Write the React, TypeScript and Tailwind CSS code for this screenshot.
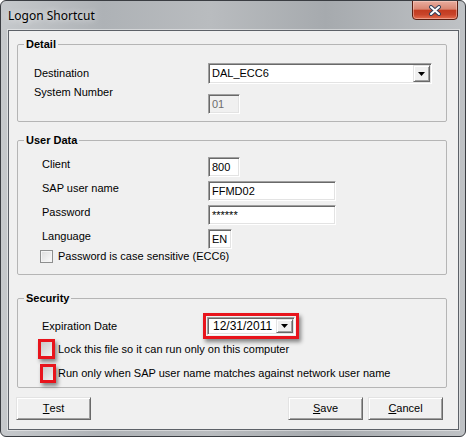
import React from "react";

const sunken =
  "border border-t-[#a0a0a0] border-l-[#a0a0a0] border-b-white border-r-white shadow-[inset_1px_1px_0_#696969,inset_-1px_-1px_0_#e3e3e3]";
const raised =
  "border border-t-[#e3e3e3] border-l-[#e3e3e3] border-b-[#696969] border-r-[#696969] shadow-[inset_1px_1px_0_#ffffff,inset_-1px_-1px_0_#a0a0a0]";

function DropBtn() {
  return (
    <div className={`w-[17px] h-full shrink-0 bg-[#f0f0f0] ${raised} flex items-center justify-center`}>
      <svg width="7" height="4" viewBox="0 0 7 4">
        <polygon points="0,0 7,0 3.5,4" fill="#000" />
      </svg>
    </div>
  );
}

function Field({ w, value, disabled }: { w: string; value: string; disabled?: boolean }) {
  return (
    <div
      className={`${w} h-[20px] ${sunken} ${disabled ? "bg-[#f0f0f0] text-[#6d6d6d]" : "bg-white text-black"} pl-[3px] text-[11px] leading-[18px] overflow-hidden whitespace-nowrap`}
    >
      {value}
    </div>
  );
}

function Group({ title, className, children }: { title: string; className: string; children: React.ReactNode }) {
  return (
    <fieldset className={`ml-[8px] w-[430px] border border-[#b5b5b5] rounded-[2px] ${className}`}>
      <legend className="ml-[6px] px-[2px] text-[11px] leading-[15px] font-bold text-black">{title}</legend>
      {children}
    </fieldset>
  );
}

function CheckBox() {
  return (
    <div className="w-[13px] h-[13px] shrink-0 border border-[#8e8f8f] bg-[linear-gradient(135deg,#dcdcdc,#fbfbfb)] shadow-[inset_0_0_0_1px_#f4f4f4]" />
  );
}

function RedCheck({ w, h }: { w: string; h: string }) {
  return (
    <div className={`${w} ${h} shrink-0 border-[3px] border-[#e8141c] shadow-[2px_3px_4px_rgba(0,0,0,0.45)] bg-[linear-gradient(135deg,#c9c9c9,#f2f2f2)]`} />
  );
}

function Btn({ label, rest }: { label: string; rest: string }) {
  return (
    <div className={`w-[75px] h-[23px] bg-[#f0f0f0] ${raised} flex items-center justify-center text-[11px] text-black`}>
      <span className="underline underline-offset-[1px]">{label}</span>
      <span>{rest}</span>
    </div>
  );
}

export default function App() {
  return (
    <div className="w-[466px] h-[437px] border border-[#3a3d42] rounded-[6px] bg-[linear-gradient(90deg,#c6c9cc_0%,#aeb2b6_22%,#b9bcbf_45%,#a6aaae_70%,#bfc2c5_100%)] flex flex-col font-['Liberation_Sans',Arial,sans-serif] overflow-hidden">
      {/* title bar */}
      <div className="h-[29px] flex justify-between pl-[7px] pr-[7px]">
        <div className="self-center text-[12px] text-black font-['Noto_Sans',sans-serif] [text-shadow:0_0_6px_rgba(255,255,255,0.95)]">
          Logon Shortcut
        </div>
        <div className="-mt-[1px] w-[46px] h-[20px] rounded-b-[4px] border border-[#5a1e12] bg-[linear-gradient(180deg,#e9ad9f_0%,#d98672_45%,#c33b20_52%,#c8442a_75%,#e56d4f_100%)] shadow-[inset_0_0_0_1px_rgba(255,220,210,0.45)] flex items-center justify-center">
          <svg width="14" height="11" viewBox="0 0 14 11">
            <path d="M3 2 L11 9 M11 2 L3 9" stroke="#34415a" strokeWidth="4" strokeLinecap="round" />
            <path d="M3 2 L11 9 M11 2 L3 9" stroke="#ffffff" strokeWidth="2" strokeLinecap="round" />
          </svg>
        </div>
      </div>

      {/* client area */}
      <div className="ml-[7px] w-[451px] h-[400px] border border-[#5d6168] shadow-[0_0_0_1px_rgba(255,255,255,0.45)] bg-[#f0f0f0] flex flex-col">
        <div className="h-[6px]" />

        {/* Detail */}
        <Group title="Detail" className="h-[85px]">
          <div className="pt-[11px]">
            <div className="flex items-center h-[21px]">
              <div className="w-[190px] pl-[16px] text-[11px] leading-[13px] text-black">Destination</div>
              <div className={`w-[224px] h-[21px] bg-white ${sunken} p-[1px] flex`}>
                <div className="flex-1 pl-[2px] text-[11px] leading-[17px] text-black">DAL_ECC6</div>
                <DropBtn />
              </div>
            </div>
            <div className="flex items-start mt-[10px]">
              <div className="w-[190px] pl-[16px] -mt-[8px] text-[11px] leading-[13px] text-black">System Number</div>
              <Field w="w-[32px]" value="01" disabled />
            </div>
          </div>
        </Group>

        <div className="h-[11px]" />

        {/* User Data */}
        <Group title="User Data" className="h-[142px]">
          <div className="pt-[9px]">
            <div className="flex flex-col gap-[4px]">
              {[
                { l: "Client", w: "w-[32px]", v: "800" },
                { l: "SAP user name", w: "w-[128px]", v: "FFMD02" },
                { l: "Password", w: "w-[128px]", v: "******" },
                { l: "Language", w: "w-[24px]", v: "EN" },
              ].map((r) => (
                <div key={r.l} className="flex items-start h-[20px]">
                  <div className="w-[190px] pl-[24px] pt-[1px] text-[11px] leading-[13px] text-black">{r.l}</div>
                  <Field w={r.w} value={r.v} />
                </div>
              ))}
            </div>
            <div className="flex items-center mt-[1px] pl-[22px] gap-[5px]">
              <CheckBox />
              <div className="text-[11px] leading-[13px] text-black">Password is case sensitive (ECC6)</div>
            </div>
          </div>
        </Group>

        <div className="h-[16px]" />

        {/* Security */}
        <Group title="Security" className="h-[97px]">
          <div className="pt-[7px]">
            <div className="flex items-center h-[26px]">
              <div className="w-[185px] pl-[24px] text-[11px] leading-[13px] text-black">Expiration Date</div>
              <div className="w-[96px] h-[26px] border-[3px] border-[#e8141c] p-[1px] shadow-[2px_3px_4px_rgba(0,0,0,0.45)]">
                <div className={`w-full h-full bg-white ${sunken} p-[1px] flex`}>
                  <div className="flex-1 pl-[4px] text-[12px] leading-[14px] text-black">12/31/2011</div>
                  <DropBtn />
                </div>
              </div>
            </div>
            <div className="flex items-center ml-[20px] gap-[3px]">
              <RedCheck w="w-[17px]" h="h-[20px]" />
              <div className="text-[11px] leading-[13px] text-black">Lock this file so it can run only on this computer</div>
            </div>
            <div className="flex items-center ml-[22px] mt-[5px] gap-[2px]">
              <RedCheck w="w-[16px]" h="h-[19px]" />
              <div className="text-[11px] leading-[13px] text-black">Run only when SAP user name matches against network user name</div>
            </div>
          </div>
        </Group>

        {/* buttons */}
        <div className="mt-[9px] h-[23px] flex justify-between pl-[7px] pr-[15px]">
          <Btn label="T" rest="est" />
          <div className="flex gap-[5px]">
            <Btn label="S" rest="ave" />
            <Btn label="C" rest="ancel" />
          </div>
        </div>
      </div>
    </div>
  );
}
